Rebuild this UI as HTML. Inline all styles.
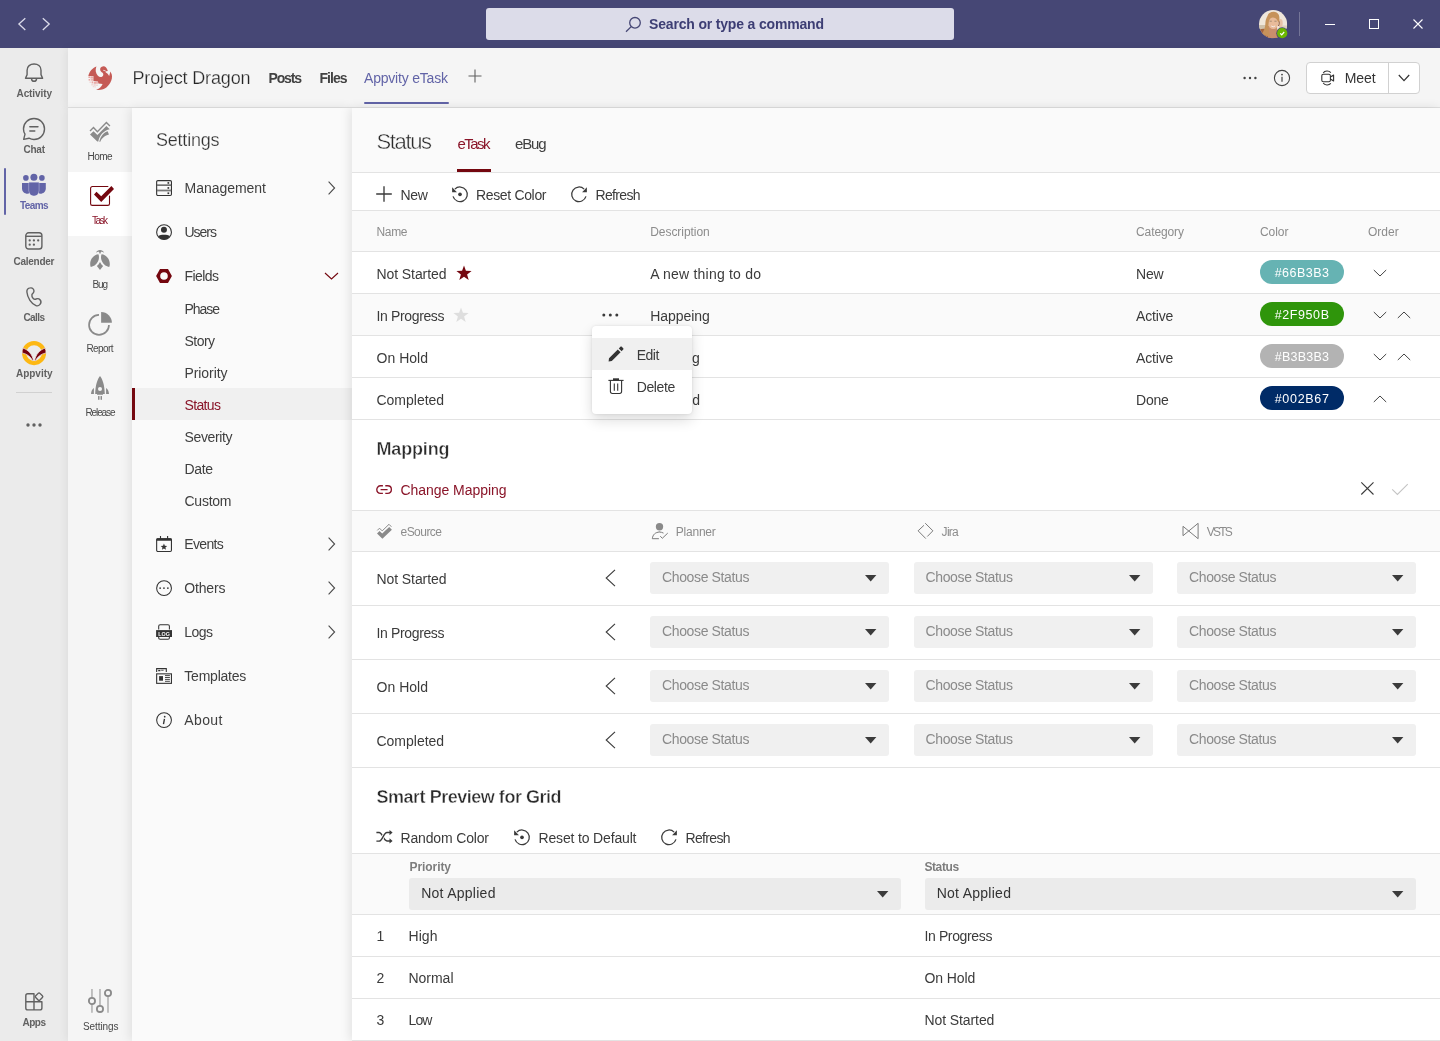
<!DOCTYPE html>
<html lang="en"><head><meta charset="utf-8"><title>Project Dragon - Appvity eTask</title>
<style>
html,body{margin:0;padding:0;}
body{width:1440px;height:1041px;overflow:hidden;position:relative;background:#f5f5f5;font-family:"Liberation Sans",sans-serif;}
.t{position:absolute;white-space:nowrap;display:block;}
.b{position:absolute;box-sizing:border-box;}
.i{position:absolute;overflow:visible;}
#w{position:absolute;left:0;top:0;width:1440px;height:1041px;overflow:hidden;will-change:transform;}
</style></head><body><div id="w">
<div class="b" style="left:0px;top:0px;width:1440px;height:48px;background:#464775;"></div>
<svg class="i" style="left:16px;top:17px;" width="12" height="14" viewBox="0 0 12 14" preserveAspectRatio="none"><path d="M9.3 1.3 L2.9 7.1 L9.3 12.9" fill="none" stroke="#dcdcea" stroke-width="1.3"/></svg>
<svg class="i" style="left:40px;top:17px;" width="12" height="14" viewBox="0 0 12 14" preserveAspectRatio="none"><path d="M2.8 1.3 L9.2 7.1 L2.8 12.9" fill="none" stroke="#dcdcea" stroke-width="1.3"/></svg>
<div class="b" style="left:486px;top:8px;width:468px;height:32px;background:#dcdce9;border-radius:3px;"></div>
<svg class="i" style="left:625px;top:16px;" width="17" height="17" viewBox="0 0 17 17" preserveAspectRatio="none"><circle cx="10" cy="6.8" r="5.3" fill="none" stroke="#464775" stroke-width="1.3"/><path d="M6.2 10.6 L1 15.8" stroke="#464775" stroke-width="1.3" fill="none"/></svg>
<span class="t" style="left:649.00px;top:13.50px;height:21px;line-height:21px;font-size:14px;color:#3d3e74;font-weight:700;letter-spacing:-0.172px;">Search or type a command</span>
<svg class="i" style="left:1258.9px;top:9.8px" width="29" height="29" viewBox="0 0 29 29">
<defs><clipPath id="av"><circle cx="14.1" cy="14.1" r="14.1"/></clipPath></defs>
<g clip-path="url(#av)">
<rect width="28.2" height="28.2" fill="#efe6da"/>
<rect x="0" y="15" width="9" height="5" fill="#cfc1ab"/>
<rect x="20" y="15.5" width="9" height="3" fill="#ddd0bd"/>
<path d="M0 19.5 C4 18 8 18.5 11 21 L19 21 L19 28.2 L0 28.2 Z" fill="#a4623c"/>
<path d="M9 16 L18 16 L18.5 28.2 L9 28.2 Z" fill="#c98e6c"/>
<ellipse cx="21.6" cy="13.2" rx="2.1" ry="4.2" fill="#e9c3a8"/>
<path d="M19.6 10.5 C20.4 12 20.4 14.5 19.4 16" stroke="#7a4a30" stroke-width="0.9" fill="none"/>
<ellipse cx="14.2" cy="12.6" rx="5.2" ry="6.5" fill="#e8bb9a"/>
<path d="M8.5 6 C9 3 12 1.6 15 1.8 C18 2 20.6 4.2 20.4 8.4 C20.4 10 20 11.6 19.6 12.6 L18.4 10.6 C17.2 8 14 6.8 11.6 8.2 C10 9.4 9.6 12 9.6 15 C9.6 19 10.2 22.5 11.4 27 L2.5 24.5 C5 21 6.4 17 6.4 13 C6.4 10 7.4 8 8.5 6 Z" fill="#c6925a"/>
<path d="M10.6 11.2 H12.8 M15.4 11.2 H17.6" stroke="#8a7a62" stroke-width="0.7"/>
<path d="M12.2 16 Q14.2 17.6 16.2 16" stroke="#f6eeee" stroke-width="0.9" fill="none"/>
</g>
<circle cx="23.2" cy="23.2" r="5.9" fill="#464775"/><circle cx="23.2" cy="23.2" r="5.1" fill="#6bb700"/>
<path d="M21.2 23.4 L22.7 24.8 L25.2 22" fill="none" stroke="#fff" stroke-width="1.2"/>
</svg>
<div class="b" style="left:1299px;top:12px;width:1px;height:24px;background:rgba(255,255,255,0.25);"></div>
<div class="b" style="left:1325px;top:24px;width:10px;height:1px;background:#fff;"></div>
<div class="b" style="left:1369px;top:19px;width:10px;height:10px;border:1px solid #fff;"></div>
<svg class="i" style="left:1413px;top:19px;" width="10" height="10" viewBox="0 0 10 10" preserveAspectRatio="none"><path d="M0.5 0.5 L9.5 9.5 M9.5 0.5 L0.5 9.5" stroke="#fff" stroke-width="1.1" fill="none"/></svg>
<div class="b" style="left:0px;top:48px;width:68px;height:993px;background:#ebebeb;"></div>
<svg class="i" style="left:24px;top:62px;" width="20" height="21" viewBox="0 0 20 21" preserveAspectRatio="none"><path d="M3.1 12.6 V8.2 C3.1 4.2 6.2 2 10.05 2 C13.9 2 17 4.2 17 8.2 V12.6 L18.6 16.3 H1.5 Z" fill="none" stroke="#616161" stroke-width="1.4" stroke-linejoin="round"/><path d="M7.5 16.6 C7.7 20.2 12.4 20.2 12.6 16.6" fill="none" stroke="#616161" stroke-width="1.4"/></svg>
<span class="t" style="left:16.50px;top:85.80px;height:15px;line-height:15px;font-size:10px;color:#616161;font-weight:700;letter-spacing:-0.089px;">Activity</span>
<svg class="i" style="left:22px;top:117px;" width="24" height="24" viewBox="0 0 24 24" preserveAspectRatio="none"><path d="M12 1.5 C17.8 1.5 22.5 6.2 22.5 12 C22.5 17.8 17.8 22.5 12 22.5 C10.2 22.5 8.5 22 7 21.2 L1.7 22.4 L3 17.2 C2 15.7 1.5 13.9 1.5 12 C1.5 6.2 6.2 1.5 12 1.5 Z" fill="none" stroke="#616161" stroke-width="1.4" stroke-linejoin="round"/><path d="M7.8 9.8 H16 M7.8 14 H12.8" stroke="#616161" stroke-width="1.4" fill="none" stroke-linecap="round"/></svg>
<span class="t" style="left:23.50px;top:141.80px;height:15px;line-height:15px;font-size:10px;color:#616161;font-weight:700;letter-spacing:-0.240px;">Chat</span>
<div class="b" style="left:4px;top:168px;width:2px;height:47px;background:#6264a7;border-radius:1px;"></div>
<svg class="i" style="left:22px;top:173px;" width="24" height="23" viewBox="0 0 24 23" preserveAspectRatio="none"><circle cx="11.9" cy="4.2" r="3.5" fill="#6264a7"/><circle cx="3.9" cy="4.9" r="2.8" fill="#6264a7"/><circle cx="19.9" cy="4.9" r="2.8" fill="#6264a7"/><path d="M0 9.9 H7 V20.6 C3.2 21.4 0 19 0 15.5 Z" fill="#6264a7"/><path d="M16.9 9.9 H23.8 V15.5 C23.8 19 20.6 21.4 16.9 20.6 Z" fill="#6264a7"/><path d="M6.6 9.4 H17.3 V17.8 A5.35 5.2 0 0 1 6.6 17.8 Z" fill="#c3c4e3"/><path d="M7.1 9.4 H16.8 V17.8 A4.85 4.9 0 0 1 7.1 17.8 Z" fill="#6264a7"/></svg>
<span class="t" style="left:20.00px;top:197.80px;height:15px;line-height:15px;font-size:10px;color:#6264a7;font-weight:700;letter-spacing:-0.610px;">Teams</span>
<svg class="i" style="left:24px;top:231px;" width="20" height="20" viewBox="0 0 20 20" preserveAspectRatio="none"><rect x="1.8" y="1.8" width="16.1" height="16.2" rx="2.8" fill="none" stroke="#616161" stroke-width="1.4"/><path d="M1.8 5.3 H17.9" stroke="#616161" stroke-width="1.4"/><g fill="#616161"><circle cx="5.7" cy="9.4" r="1.15"/><circle cx="9.9" cy="9.4" r="1.15"/><circle cx="14.2" cy="9.4" r="1.15"/><circle cx="5.7" cy="13.7" r="1.15"/><circle cx="9.9" cy="13.7" r="1.15"/></g></svg>
<span class="t" style="left:13.50px;top:253.80px;height:15px;line-height:15px;font-size:10px;color:#616161;font-weight:700;letter-spacing:-0.256px;">Calender</span>
<svg class="i" style="left:24px;top:286px;" width="20" height="22" viewBox="0 0 20 22" preserveAspectRatio="none"><path d="M6.4 1.9 C8.6 1.5 10.3 3.6 9.9 5.6 C9.6 7 8.2 7.6 7.9 8.6 C7.7 9.8 8.4 11.6 9.2 12.4 C10 13.2 11 13.4 12 13 C13.4 12.4 15 12.6 16 13.8 C17.2 15.2 17.2 17 16 18.4 C14.8 19.8 13.4 20.2 12 19.6 C7.4 17.8 3.4 11.8 2.9 6 C2.7 3.8 4.2 2.2 6.4 1.9 Z" fill="none" stroke="#616161" stroke-width="1.4" stroke-linejoin="round"/></svg>
<span class="t" style="left:23.50px;top:309.80px;height:15px;line-height:15px;font-size:10px;color:#616161;font-weight:700;letter-spacing:-0.600px;">Calls</span>
<svg class="i" style="left:21.95px;top:340.9px;" width="24.14" height="24.14" viewBox="0 0 24.14 24.14" preserveAspectRatio="none"><circle cx="12.07" cy="12.07" r="9.95" fill="none" stroke="#fdb813" stroke-width="4.25"/><g fill="#75000e" stroke="#f6f0ee" stroke-width="0.7"><path d="M1.1 7.1 C6.5 9 10.3 13.5 11.5 19.6 L10.6 19.8 C9 16 5.5 13 0.1 11.9 C0.1 10 0.4 8.5 1.1 7.1 Z"/><path d="M23.04 7.1 C17.64 9 13.84 13.5 12.64 19.6 L13.54 19.8 C15.14 16 18.64 13 24.04 11.9 C24.04 10 23.74 8.5 23.04 7.1 Z"/></g></svg>
<span class="t" style="left:16.00px;top:365.80px;height:15px;line-height:15px;font-size:10px;color:#616161;font-weight:700;letter-spacing:-0.028px;">Appvity</span>
<div class="b" style="left:16px;top:392px;width:36px;height:1px;background:#d1d1d1;"></div>
<svg class="i" style="left:26px;top:423px;" width="16" height="4" viewBox="0 0 16 4" preserveAspectRatio="none"><circle cx="2" cy="2" r="1.7" fill="#616161"/><circle cx="8" cy="2" r="1.7" fill="#616161"/><circle cx="14" cy="2" r="1.7" fill="#616161"/></svg>
<svg class="i" style="left:24px;top:991px;" width="21" height="21" viewBox="0 0 21 21" preserveAspectRatio="none"><path d="M10 10.8 V2.8 H3.8 A2 2 0 0 0 1.8 4.8 V16.9 A2 2 0 0 0 3.8 18.9 H15.9 A2 2 0 0 0 17.9 16.9 V10.8 H1.8 M10 10.8 V18.9" fill="none" stroke="#616161" stroke-width="1.4" stroke-linejoin="round"/><rect x="12.05" y="2.7" width="6" height="6" rx="1.3" transform="rotate(45 15.05 5.7)" fill="none" stroke="#616161" stroke-width="1.4"/></svg>
<span class="t" style="left:22.50px;top:1015.30px;height:15px;line-height:15px;font-size:10px;color:#616161;font-weight:700;letter-spacing:-0.500px;">Apps</span>
<div class="b" style="left:68px;top:48px;width:1372px;height:59px;background:#f5f5f5;box-shadow:-2px 0 8px rgba(0,0,0,0.06);"></div>
<div class="b" style="left:68px;top:107px;width:1372px;height:1px;background:#e0e0e0;"></div>
<svg class="i" style="left:87.8px;top:65.7px" width="24.4" height="24.4" viewBox="0 0 24.4 24.4">
<g fill="#e9a9a5"><rect x="0.4" y="10.4" width="1.6" height="1.6"/><rect x="2.4" y="10.4" width="2.6" height="2.2"/><rect x="0.6" y="13" width="1.4" height="1.6"/><rect x="2.6" y="13.2" width="2.4" height="1.4"/><rect x="1.6" y="15.6" width="1.2" height="1.2" opacity="0.6"/><rect x="3.6" y="15.4" width="1.6" height="2"/><rect x="5.8" y="15.8" width="2.2" height="2"/><rect x="8.2" y="15.8" width="1.6" height="2"/><rect x="3.4" y="18.2" width="1.4" height="1.2" opacity="0.6"/><rect x="5.4" y="18.4" width="2.4" height="1.2" opacity="0.6"/><rect x="4.8" y="20.2" width="1.4" height="1" opacity="0.5"/><rect x="6.6" y="20.4" width="1.2" height="1" opacity="0.5"/><rect x="8.4" y="18.6" width="1.2" height="1.2" opacity="0.7"/></g>
<path d="M8.5 0.5 C5 1.5 1.5 5 0.3 10 L5.4 10 L5.4 15 L10 15.4 L10.4 17.4 C12 17.7 13.5 17.7 14.6 17.9 C13.5 21 11 23 8.1 23.7 C13 25 19 23 22.4 16.6 C23.8 14 24.5 11 23.7 8.3 L22.4 5.5 L21.2 10.1 C20.5 8.5 19 7 17.5 6.3 L19.8 4.8 C19 2 17.5 0.3 15.4 0.2 C13 0.5 11.8 2.3 12.2 3.7 C12.3 5 13.5 5.8 14.6 6.8 C15.8 8 15.5 10 14 10.8 C11.5 11.8 8.5 9.5 7.8 5.5 C7.6 3.5 7.9 1.8 8.5 0.5 Z" fill="#c55a55"/>
<path d="M15.4 3.8 L19.4 5.6 L19 6 L15.2 4.6 Z" fill="#f5f5f5"/>
</svg>
<span class="t" style="left:132.50px;top:65.00px;height:27px;line-height:27px;font-size:18px;color:#252525;letter-spacing:-0.158px;-webkit-text-stroke:0.25px #f5f5f5;">Project Dragon</span>
<span class="t" style="left:268.50px;top:68.20px;height:21px;line-height:21px;font-size:14px;color:#424242;font-weight:700;letter-spacing:-1.155px;">Posts</span>
<span class="t" style="left:319.50px;top:68.20px;height:21px;line-height:21px;font-size:14px;color:#424242;font-weight:700;letter-spacing:-0.976px;">Files</span>
<span class="t" style="left:364.00px;top:68.20px;height:21px;line-height:21px;font-size:14px;color:#6264a7;letter-spacing:-0.200px;">Appvity eTask</span>
<div class="b" style="left:364px;top:101.6px;width:85px;height:2.4px;background:#6264a7;border-radius:1.2px;"></div>
<svg class="i" style="left:468px;top:69px;" width="14" height="14" viewBox="0 0 14 14" preserveAspectRatio="none"><path d="M7 0.5 V13.5 M0.5 7 H13.5" stroke="#616161" stroke-width="1.1" fill="none"/></svg>
<svg class="i" style="left:1243px;top:76px;" width="14" height="4" viewBox="0 0 14 4" preserveAspectRatio="none"><circle cx="1.6" cy="2" r="1.2" fill="#424242"/><circle cx="7" cy="2" r="1.2" fill="#424242"/><circle cx="12.4" cy="2" r="1.2" fill="#424242"/></svg>
<svg class="i" style="left:1273px;top:69px;" width="18" height="18" viewBox="0 0 18 18" preserveAspectRatio="none"><circle cx="9" cy="9" r="7.6" fill="none" stroke="#424242" stroke-width="1.1"/><circle cx="9" cy="5.6" r="0.9" fill="#424242"/><path d="M9 7.8 V12.8" stroke="#424242" stroke-width="1.2"/></svg>
<div class="b" style="left:1306px;top:62px;width:114px;height:32px;background:#fff;border:1px solid #d1d1d1;border-radius:4px;"></div>
<div class="b" style="left:1388px;top:63px;width:1px;height:30px;background:#d1d1d1;"></div>
<svg class="i" style="left:1321px;top:70px;" width="15" height="16" viewBox="0 0 15 16" preserveAspectRatio="none"><rect x="0.8" y="4.2" width="8.6" height="7.6" rx="1.6" fill="none" stroke="#333" stroke-width="1.1"/><path d="M9.4 7 L12.6 5 V11 L9.4 9" fill="none" stroke="#333" stroke-width="1.1" stroke-linejoin="round"/><path d="M2.2 3 C3.8 0.6 7.8 0.4 9.8 2.6 M2.2 13 C3.8 15.4 7.8 15.6 9.8 13.4" fill="none" stroke="#333" stroke-width="1.1"/></svg>
<span class="t" style="left:1344.70px;top:68.30px;height:21px;line-height:21px;font-size:14px;color:#333;letter-spacing:-0.041px;">Meet</span>
<svg class="i" style="left:1398px;top:74px;" width="12" height="8" viewBox="0 0 12 8" preserveAspectRatio="none"><path d="M0.8 1 L6 6.6 L11.2 1" fill="none" stroke="#333" stroke-width="1.2"/></svg>
<div class="b" style="left:68px;top:108px;width:64px;height:933px;background:#f5f5f5;box-shadow:-2px 0 8px rgba(0,0,0,0.06);"></div>
<svg class="i" style="left:90px;top:122px;" width="20" height="20" viewBox="0 0 20 20" preserveAspectRatio="none"><path d="M0 9 L3.5 5.5 L7.4 9.7 L16.4 0.5 L19.9 3.9" fill="none" stroke="#8a8a8a" stroke-width="1.4"/><path d="M0 12.6 L3.5 9.2 L7.4 13.1 L16.4 4 L19.7 7.3 C14 8.5 9.5 13 8.3 19.4 L7.3 19.4 Z" fill="#8a8a8a"/><path d="M9.3 19.8 C10.5 14 14 10.5 17.6 9.3 L19 12.6 C15 13.5 11.5 16.5 10.3 19.8 Z" fill="#8a8a8a"/></svg>
<span class="t" style="left:87.50px;top:149.20px;height:15px;line-height:15px;font-size:10px;color:#484848;letter-spacing:-0.560px;">Home</span>
<div class="b" style="left:68px;top:172px;width:64px;height:64px;background:#ffffff;"></div>
<svg class="i" style="left:90px;top:184px;" width="25" height="22" viewBox="0 0 25 22" preserveAspectRatio="none"><path d="M17.9 2.55 H2.3 A1.7 1.7 0 0 0 0.6 4.25 V19.7 A1.7 1.7 0 0 0 2.3 21.4 H17.8 A1.7 1.7 0 0 0 19.5 19.7 V12" fill="none" stroke="#74070f" stroke-width="1.1" stroke-linecap="round"/><path d="M4 10.4 L6.5 7.8 L11.2 12.2 L21.4 2 L24 4.9 L11.2 17.9 Z" fill="#74070f"/></svg>
<span class="t" style="left:92.00px;top:213.20px;height:15px;line-height:15px;font-size:10px;color:#8a1529;letter-spacing:-1.527px;">Task</span>
<svg class="i" style="left:90px;top:249.9px;" width="20" height="20" viewBox="0 0 20 20" preserveAspectRatio="none"><path d="M5.9 2.9 C7.5 -0.9 12.5 -0.9 14.2 2.9 C12.5 1.8 11.5 1.6 10.8 1.9 L10.6 3.5 H9.4 L9.2 1.9 C8.5 1.6 7.5 1.8 5.9 2.9 Z" fill="#8a8a8a"/><path d="M8.4 4.2 C4 4.5 0 9 0.2 14 C0.2 15.5 0.4 16.4 0.9 16.9 C4.5 16.4 7.5 13.5 8.7 9.5 C9.2 7.5 9 5.5 8.4 4.2 Z" fill="#8a8a8a"/><path d="M11.6 4.2 C16 4.5 20 9 19.8 14 C19.8 15.5 19.6 16.4 19.1 16.9 C15.5 16.4 12.5 13.5 11.3 9.5 C10.8 7.5 11 5.5 11.6 4.2 Z" fill="#8a8a8a"/><path d="M10 12 C11 14 12 15 13.1 16 L10 20 L6.9 16 C8 15 9 14 10 12 Z" fill="#8a8a8a"/></svg>
<span class="t" style="left:92.50px;top:277.30px;height:15px;line-height:15px;font-size:10px;color:#484848;letter-spacing:-1.145px;">Bug</span>
<svg class="i" style="left:88px;top:312px;" width="24" height="24" viewBox="0 0 24 24" preserveAspectRatio="none"><path d="M11 2.95 A9.95 9.95 0 1 0 20.95 12.9" fill="none" stroke="#8a8a8a" stroke-width="1.7"/><path d="M13.1 10.8 V0.05 A10.75 10.75 0 0 1 23.9 10.8 Z" fill="#8a8a8a"/></svg>
<span class="t" style="left:86.50px;top:341.40px;height:15px;line-height:15px;font-size:10px;color:#484848;letter-spacing:-0.602px;">Report</span>
<svg class="i" style="left:90px;top:376px;" width="20" height="24" viewBox="0 0 20 24" preserveAspectRatio="none"><path d="M10 0 C12.5 3 14.6 9 14.8 17.9 H13 L12.9 18.7 H7.1 L7 17.9 H5.2 C5.4 9 7.5 3 10 0 Z" fill="#8a8a8a"/><circle cx="10" cy="13" r="2" fill="#f5f5f5"/><path d="M3.9 12 V17.9 H1 C1.2 15 2.3 13 3.9 12 Z M16.1 12 V17.9 H19 C18.8 15 17.7 13 16.1 12 Z" fill="#8a8a8a"/><rect x="8.1" y="20.1" width="3.9" height="3.6" fill="#c4c4c4"/><path d="M8.6 20.1 V23.7 M11.5 20.1 V23.7" stroke="#8a8a8a" stroke-width="1"/></svg>
<span class="t" style="left:85.50px;top:405.30px;height:15px;line-height:15px;font-size:10px;color:#484848;letter-spacing:-1.115px;">Release</span>
<svg class="i" style="left:88px;top:988px;" width="25" height="25" viewBox="0 0 25 25" preserveAspectRatio="none"><path d="M3.96 1.1 V9.8 M3.96 16.1 V24.8 M11.98 1.1 V17.8 M20 8.2 V24.8" stroke="#b3b3b3" stroke-width="1.6" fill="none"/><circle cx="3.96" cy="12.95" r="3.1" fill="none" stroke="#8a8a8a" stroke-width="1.8"/><circle cx="11.98" cy="20.9" r="3.1" fill="none" stroke="#8a8a8a" stroke-width="1.8"/><circle cx="20" cy="5" r="3.1" fill="none" stroke="#8a8a8a" stroke-width="1.8"/></svg>
<span class="t" style="left:83.00px;top:1019.10px;height:15px;line-height:15px;font-size:10px;color:#484848;letter-spacing:-0.090px;">Settings</span>
<div class="b" style="left:132px;top:108px;width:220px;height:933px;background:#fafafa;box-shadow:-2px 0 10px rgba(0,0,0,0.09);"></div>
<span class="t" style="left:156.00px;top:127.30px;height:27px;line-height:27px;font-size:18px;color:#303030;letter-spacing:-0.219px;-webkit-text-stroke:0.25px #fafafa;">Settings</span>
<svg class="i" style="left:156px;top:180px;" width="17" height="17" viewBox="0 0 17 17" preserveAspectRatio="none"><rect x="0.65" y="0.65" width="14.8" height="14.8" rx="1.2" fill="none" stroke="#333333" stroke-width="1.1"/><path d="M0.65 5.3 H15.45 M0.65 10.6 H15.45" stroke="#333333" stroke-width="1.5"/><path d="M0.9 5.3 H15.2 M0.9 10.6 H15.2" stroke="#fafafa" stroke-width="0.4"/><rect x="11.5" y="2.1" width="1.7" height="1.7" fill="#333333"/><rect x="11.5" y="7.1" width="1.7" height="1.7" fill="#333333"/><rect x="11.5" y="12.4" width="1.7" height="1.7" fill="#333333"/></svg>
<span class="t" style="left:184.50px;top:177.50px;height:21px;line-height:21px;font-size:14px;color:#3f3f3f;letter-spacing:-0.024px;">Management</span>
<svg class="i" style="left:327px;top:180px;" width="9" height="16" viewBox="0 0 9 16" preserveAspectRatio="none"><path d="M1.6 1.6 L7.6 8 L1.6 14.4" fill="none" stroke="#4a4a4a" stroke-width="1.1"/></svg>
<svg class="i" style="left:156px;top:224px;" width="17" height="17" viewBox="0 0 17 17" preserveAspectRatio="none"><circle cx="8.05" cy="8.15" r="7.4" fill="none" stroke="#333333" stroke-width="1.1"/><circle cx="7.95" cy="5.7" r="3" fill="#333333"/><path d="M2.2 12 C4.5 10.3 11.5 10.3 13.9 12 C12.6 14.4 10.6 15.6 8.05 15.6 C5.5 15.6 3.4 14.4 2.2 12 Z" fill="#333333"/></svg>
<span class="t" style="left:184.50px;top:221.50px;height:21px;line-height:21px;font-size:14px;color:#3f3f3f;letter-spacing:-1.014px;">Users</span>
<svg class="i" style="left:156.1px;top:269.2px;" width="16" height="14" viewBox="0 0 16 14" preserveAspectRatio="none"><path fill-rule="evenodd" d="M4 0 H12 L15.9 7 L12 14 H4 L0.1 7 Z M8 3.2 A3.8 3.8 0 1 0 8 10.8 A3.8 3.8 0 1 0 8 3.2 Z" fill="#74070f"/></svg>
<span class="t" style="left:184.50px;top:265.50px;height:21px;line-height:21px;font-size:14px;color:#3f3f3f;letter-spacing:-0.570px;">Fields</span>
<svg class="i" style="left:324px;top:272px;" width="15" height="8" viewBox="0 0 15 8" preserveAspectRatio="none"><path d="M1 1 L7.5 7 L14 1" fill="none" stroke="#74070f" stroke-width="1.1"/></svg>
<span class="t" style="left:184.50px;top:298.50px;height:21px;line-height:21px;font-size:14px;color:#3f3f3f;letter-spacing:-1.047px;">Phase</span>
<span class="t" style="left:184.50px;top:330.50px;height:21px;line-height:21px;font-size:14px;color:#3f3f3f;letter-spacing:-0.544px;">Story</span>
<span class="t" style="left:184.50px;top:362.50px;height:21px;line-height:21px;font-size:14px;color:#3f3f3f;letter-spacing:-0.079px;">Priority</span>
<div class="b" style="left:132px;top:388px;width:220px;height:32px;background:#f0f0f0;"></div>
<div class="b" style="left:132px;top:388px;width:3px;height:32px;background:#74070f;"></div>
<span class="t" style="left:184.50px;top:394.50px;height:21px;line-height:21px;font-size:14px;color:#8a1529;letter-spacing:-0.638px;">Status</span>
<span class="t" style="left:184.50px;top:426.50px;height:21px;line-height:21px;font-size:14px;color:#3f3f3f;letter-spacing:-0.367px;">Severity</span>
<span class="t" style="left:184.50px;top:458.50px;height:21px;line-height:21px;font-size:14px;color:#3f3f3f;letter-spacing:-0.356px;">Date</span>
<span class="t" style="left:184.50px;top:490.50px;height:21px;line-height:21px;font-size:14px;color:#3f3f3f;letter-spacing:-0.246px;">Custom</span>
<svg class="i" style="left:156px;top:535px;" width="17" height="18" viewBox="0 0 17 18" preserveAspectRatio="none"><rect x="0.65" y="3.7" width="14.8" height="12.8" rx="1.2" fill="none" stroke="#333333" stroke-width="1.1"/><path d="M0.4 4.2 C0.4 3.6 0.8 3.2 1.4 3.2 H14.7 C15.3 3.2 15.7 3.6 15.7 4.2 V5.8 H0.4 Z" fill="#333333"/><path d="M4.5 1 V4 M11.6 1 V4" stroke="#333333" stroke-width="1.1"/><path d="M7.95 8.6 L8.85 10.8 L11.2 11 L9.4 12.5 L10 14.8 L7.95 13.5 L5.9 14.8 L6.5 12.5 L4.7 11 L7.05 10.8 Z" fill="#333333"/></svg>
<span class="t" style="left:184.30px;top:533.50px;height:21px;line-height:21px;font-size:14px;color:#3f3f3f;letter-spacing:-0.680px;">Events</span>
<svg class="i" style="left:327px;top:536px;" width="9" height="16" viewBox="0 0 9 16" preserveAspectRatio="none"><path d="M1.6 1.6 L7.6 8 L1.6 14.4" fill="none" stroke="#4a4a4a" stroke-width="1.1"/></svg>
<svg class="i" style="left:156px;top:580px;" width="17" height="17" viewBox="0 0 17 17" preserveAspectRatio="none"><circle cx="8.05" cy="8.15" r="7.4" fill="none" stroke="#333333" stroke-width="1.05"/><rect x="3.4" y="7.4" width="1.5" height="1.5" fill="#333333"/><rect x="7.2" y="7.4" width="1.5" height="1.5" fill="#333333"/><rect x="11.1" y="7.4" width="1.5" height="1.5" fill="#333333"/></svg>
<span class="t" style="left:184.30px;top:577.50px;height:21px;line-height:21px;font-size:14px;color:#3f3f3f;letter-spacing:-0.163px;">Others</span>
<svg class="i" style="left:327px;top:580px;" width="9" height="16" viewBox="0 0 9 16" preserveAspectRatio="none"><path d="M1.6 1.6 L7.6 8 L1.6 14.4" fill="none" stroke="#4a4a4a" stroke-width="1.1"/></svg>
<svg class="i" style="left:156px;top:624px;" width="17" height="17" viewBox="0 0 17 17" preserveAspectRatio="none"><path d="M2.7 5.6 V2.2 C2.7 1.4 3.3 0.8 4.1 0.8 H12 C12.8 0.8 13.4 1.4 13.4 2.2 V5.6 M2.7 13 V14 C2.7 14.8 3.3 15.3 4.1 15.3 H12 C12.8 15.3 13.4 14.8 13.4 14 V13" fill="none" stroke="#333333" stroke-width="1.05"/><rect x="0.1" y="6.1" width="15.9" height="6.9" fill="#333333"/><text x="8.05" y="11.5" font-family="Liberation Sans" font-size="5.4" font-weight="700" fill="#fafafa" text-anchor="middle">LOG</text></svg>
<span class="t" style="left:184.30px;top:621.50px;height:21px;line-height:21px;font-size:14px;color:#3f3f3f;letter-spacing:-0.517px;">Logs</span>
<svg class="i" style="left:327px;top:624px;" width="9" height="16" viewBox="0 0 9 16" preserveAspectRatio="none"><path d="M1.6 1.6 L7.6 8 L1.6 14.4" fill="none" stroke="#4a4a4a" stroke-width="1.1"/></svg>
<svg class="i" style="left:156px;top:667px;" width="17" height="18" viewBox="0 0 17 18" preserveAspectRatio="none"><rect x="0.65" y="6.85" width="14.8" height="9.5" fill="none" stroke="#333333" stroke-width="1.1"/><path d="M0.65 5 V1.65 H10.3 V5" fill="none" stroke="#333333" stroke-width="1.1"/><path d="M2.2 3.6 H4.4" stroke="#333333" stroke-width="1.3"/><path d="M5.2 3.3 H7.6" stroke="#333333" stroke-width="0.8"/><rect x="3.1" y="9.1" width="3.9" height="4.6" fill="#333333"/><path d="M9 8.6 H13.9 M9 10.5 H13.9 M9 12.4 H13.9 M9 14.3 H13.9" stroke="#333333" stroke-width="0.9"/></svg>
<span class="t" style="left:184.30px;top:665.50px;height:21px;line-height:21px;font-size:14px;color:#3f3f3f;letter-spacing:-0.226px;">Templates</span>
<svg class="i" style="left:156px;top:711.8px;" width="17" height="17" viewBox="0 0 17 17" preserveAspectRatio="none"><circle cx="8.05" cy="8.05" r="7.4" fill="none" stroke="#333333" stroke-width="1.05"/><circle cx="8.7" cy="4.7" r="0.85" fill="#333333"/><path d="M8.45 6.9 L7.45 12.2" stroke="#333333" stroke-width="1.35"/></svg>
<span class="t" style="left:184.30px;top:709.50px;height:21px;line-height:21px;font-size:14px;color:#3f3f3f;letter-spacing:0.354px;">About</span>
<div class="b" style="left:352px;top:108px;width:1088px;height:933px;background:#ffffff;box-shadow:-2px 0 10px rgba(0,0,0,0.10);"></div>
<div class="b" style="left:352px;top:108px;width:1088px;height:64px;background:#fafafa;"></div>
<div class="b" style="left:352px;top:172px;width:1088px;height:1px;background:#e3e3e3;"></div>
<span class="t" style="left:376.50px;top:125.10px;height:33px;line-height:33px;font-size:22px;color:#2b2b2b;letter-spacing:-1.374px;-webkit-text-stroke:0.45px #fafafa;">Status</span>
<span class="t" style="left:457.50px;top:133.30px;height:22px;line-height:22px;font-size:15px;color:#8a1529;letter-spacing:-1.553px;">eTask</span>
<span class="t" style="left:515.00px;top:133.30px;height:22px;line-height:22px;font-size:15px;color:#3f3f3f;letter-spacing:-1.175px;">eBug</span>
<div class="b" style="left:457px;top:169px;width:34px;height:3px;background:#74070f;"></div>
<div class="b" style="left:352px;top:210px;width:1088px;height:1px;background:#e3e3e3;"></div>
<svg class="i" style="left:376px;top:186px;" width="16" height="16" viewBox="0 0 16 16" preserveAspectRatio="none"><path d="M8 0.2 V15.8 M0.2 8 H15.8" stroke="#3b3b3b" stroke-width="1.35" fill="none"/></svg>
<span class="t" style="left:400.50px;top:184.80px;height:21px;line-height:21px;font-size:14px;color:#3b3b3b;letter-spacing:-0.271px;">New</span>
<svg class="i" style="left:452px;top:185.6px;" width="17" height="17" viewBox="0 0 17 17" preserveAspectRatio="none"><path d="M2.84 3.14 A7.3 7.3 0 1 1 1.02 10.43" fill="none" stroke="#3b3b3b" stroke-width="1.25"/><path d="M0.15 1.2 V6.2 H4.9 Z" fill="#3b3b3b"/><circle cx="8" cy="8.3" r="1.85" fill="#3b3b3b"/></svg>
<span class="t" style="left:476.00px;top:184.80px;height:21px;line-height:21px;font-size:14px;color:#3b3b3b;letter-spacing:-0.342px;">Reset Color</span>
<svg class="i" style="left:571px;top:185.6px;" width="17" height="17" viewBox="0 0 17 17" preserveAspectRatio="none"><path d="M13.16 3.14 A7.3 7.3 0 1 0 14.98 10.43" fill="none" stroke="#3b3b3b" stroke-width="1.25"/><path d="M15.85 1.2 V6.2 H11.1 Z" fill="#3b3b3b"/></svg>
<span class="t" style="left:595.50px;top:184.80px;height:21px;line-height:21px;font-size:14px;color:#3b3b3b;letter-spacing:-0.669px;">Refresh</span>
<div class="b" style="left:352px;top:211px;width:1088px;height:40px;background:#fafafa;"></div>
<div class="b" style="left:352px;top:251px;width:1088px;height:1px;background:#e3e3e3;"></div>
<span class="t" style="left:376.50px;top:223.20px;height:18px;line-height:18px;font-size:12px;color:#8c8c8c;letter-spacing:-0.339px;">Name</span>
<span class="t" style="left:650.20px;top:223.20px;height:18px;line-height:18px;font-size:12px;color:#8c8c8c;letter-spacing:-0.042px;">Description</span>
<span class="t" style="left:1136.00px;top:223.20px;height:18px;line-height:18px;font-size:12px;color:#8c8c8c;letter-spacing:-0.099px;">Category</span>
<span class="t" style="left:1260.00px;top:223.20px;height:18px;line-height:18px;font-size:12px;color:#8c8c8c;letter-spacing:-0.070px;">Color</span>
<span class="t" style="left:1368.00px;top:223.20px;height:18px;line-height:18px;font-size:12px;color:#8c8c8c;letter-spacing:0.007px;">Order</span>
<div class="b" style="left:352px;top:293px;width:1088px;height:1px;background:#e3e3e3;"></div>
<span class="t" style="left:376.50px;top:263.80px;height:21px;line-height:21px;font-size:14px;color:#3b3b3b;letter-spacing:-0.081px;">Not Started</span>
<svg class="i" style="left:456.2px;top:265.2px;" width="16.0" height="15.0" viewBox="0 0 15 14" preserveAspectRatio="none"><path d="M7.5 0.4 L9.3 5.3 L14.6 5.5 L10.4 8.8 L11.9 13.9 L7.5 10.9 L3.1 13.9 L4.6 8.8 L0.4 5.5 L5.7 5.3 Z" fill="#74070f"/></svg>
<span class="t" style="left:650.20px;top:263.80px;height:21px;line-height:21px;font-size:14px;color:#3b3b3b;letter-spacing:0.212px;">A new thing to do</span>
<span class="t" style="left:1136.00px;top:263.80px;height:21px;line-height:21px;font-size:14px;color:#3b3b3b;letter-spacing:-0.221px;">New</span>
<div class="b" style="left:1260px;top:259.5px;width:84px;height:24px;background:#66B3B3;border-radius:12px;"></div>
<span class="t" style="left:1274.70px;top:264.10px;height:19px;line-height:19px;font-size:12.5px;color:#ffffff;letter-spacing:0.477px;">#66B3B3</span>
<svg class="i" style="left:1373px;top:268.8px;" width="14" height="8" viewBox="0 0 14 8" preserveAspectRatio="none"><path d="M0.8 1 L7 7 L13.2 1" fill="none" stroke="#444" stroke-width="1"/></svg>
<div class="b" style="left:352px;top:294px;width:1088px;height:41px;background:#fafafa;"></div>
<div class="b" style="left:352px;top:335px;width:1088px;height:1px;background:#e3e3e3;"></div>
<span class="t" style="left:376.50px;top:305.80px;height:21px;line-height:21px;font-size:14px;color:#3b3b3b;letter-spacing:-0.358px;">In Progress</span>
<svg class="i" style="left:453.2px;top:306.6px;" width="16.0" height="15.0" viewBox="0 0 15 14" preserveAspectRatio="none"><path d="M7.5 0.4 L9.3 5.3 L14.6 5.5 L10.4 8.8 L11.9 13.9 L7.5 10.9 L3.1 13.9 L4.6 8.8 L0.4 5.5 L5.7 5.3 Z" fill="#dedede"/></svg>
<svg class="i" style="left:602px;top:313px;" width="17" height="4" viewBox="0 0 17 4" preserveAspectRatio="none"><circle cx="1.8" cy="2" r="1.5" fill="#3b3b3b"/><circle cx="8.3" cy="2" r="1.5" fill="#3b3b3b"/><circle cx="14.8" cy="2" r="1.5" fill="#3b3b3b"/></svg>
<span class="t" style="left:650.20px;top:305.80px;height:21px;line-height:21px;font-size:14px;color:#3b3b3b;letter-spacing:-0.048px;">Happeing</span>
<span class="t" style="left:1136.00px;top:305.80px;height:21px;line-height:21px;font-size:14px;color:#3b3b3b;letter-spacing:-0.164px;">Active</span>
<div class="b" style="left:1260px;top:301.5px;width:84px;height:24px;background:#2F950B;border-radius:12px;"></div>
<span class="t" style="left:1274.70px;top:306.10px;height:19px;line-height:19px;font-size:12.5px;color:#ffffff;letter-spacing:0.594px;">#2F950B</span>
<svg class="i" style="left:1373px;top:310.8px;" width="14" height="8" viewBox="0 0 14 8" preserveAspectRatio="none"><path d="M0.8 1 L7 7 L13.2 1" fill="none" stroke="#444" stroke-width="1"/></svg>
<svg class="i" style="left:1397px;top:310.8px;" width="14" height="8" viewBox="0 0 14 8" preserveAspectRatio="none"><path d="M0.8 7 L7 1 L13.2 7" fill="none" stroke="#444" stroke-width="1"/></svg>
<div class="b" style="left:352px;top:377px;width:1088px;height:1px;background:#e3e3e3;"></div>
<span class="t" style="left:376.50px;top:347.80px;height:21px;line-height:21px;font-size:14px;color:#3b3b3b;letter-spacing:0.025px;">On Hold</span>
<span class="t" style="left:650.20px;top:347.80px;height:21px;line-height:21px;font-size:14px;color:#3b3b3b;letter-spacing:-0.313px;">Pending</span>
<span class="t" style="left:1136.00px;top:347.80px;height:21px;line-height:21px;font-size:14px;color:#3b3b3b;letter-spacing:-0.164px;">Active</span>
<div class="b" style="left:1260px;top:343.5px;width:84px;height:24px;background:#B3B3B3;border-radius:12px;"></div>
<span class="t" style="left:1274.70px;top:348.10px;height:19px;line-height:19px;font-size:12.5px;color:#ffffff;letter-spacing:0.246px;">#B3B3B3</span>
<svg class="i" style="left:1373px;top:352.8px;" width="14" height="8" viewBox="0 0 14 8" preserveAspectRatio="none"><path d="M0.8 1 L7 7 L13.2 1" fill="none" stroke="#444" stroke-width="1"/></svg>
<svg class="i" style="left:1397px;top:352.8px;" width="14" height="8" viewBox="0 0 14 8" preserveAspectRatio="none"><path d="M0.8 7 L7 1 L13.2 7" fill="none" stroke="#444" stroke-width="1"/></svg>
<div class="b" style="left:352px;top:419px;width:1088px;height:1px;background:#e3e3e3;"></div>
<span class="t" style="left:376.50px;top:389.80px;height:21px;line-height:21px;font-size:14px;color:#3b3b3b;letter-spacing:-0.013px;">Completed</span>
<span class="t" style="left:650.20px;top:389.80px;height:21px;line-height:21px;font-size:14px;color:#3b3b3b;letter-spacing:-0.446px;">Finished</span>
<span class="t" style="left:1136.00px;top:389.80px;height:21px;line-height:21px;font-size:14px;color:#3b3b3b;letter-spacing:-0.191px;">Done</span>
<div class="b" style="left:1260px;top:385.5px;width:84px;height:24px;background:#002B67;border-radius:12px;"></div>
<span class="t" style="left:1274.70px;top:390.10px;height:19px;line-height:19px;font-size:12.5px;color:#ffffff;letter-spacing:0.708px;">#002B67</span>
<svg class="i" style="left:1373px;top:394.8px;" width="14" height="8" viewBox="0 0 14 8" preserveAspectRatio="none"><path d="M0.8 7 L7 1 L13.2 7" fill="none" stroke="#444" stroke-width="1"/></svg>
<span class="t" style="left:376.50px;top:435.70px;height:27px;line-height:27px;font-size:18px;color:#2b2b2b;font-weight:700;letter-spacing:-0.163px;-webkit-text-stroke:0.4px #ffffff;">Mapping</span>
<svg class="i" style="left:375.9px;top:485px;" width="16.2" height="9.2" viewBox="0 0 16.2 9.2" preserveAspectRatio="none"><path d="M6.9 0.8 H4.6 C2.3 0.8 0.8 2.5 0.8 4.6 C0.8 6.7 2.3 8.4 4.6 8.4 H6.9 M9.3 0.8 H11.6 C13.9 0.8 15.4 2.5 15.4 4.6 C15.4 6.7 13.9 8.4 11.6 8.4 H9.3 M4.6 4.6 H11.6" fill="none" stroke="#8a1529" stroke-width="1.35"/></svg>
<span class="t" style="left:400.50px;top:479.80px;height:21px;line-height:21px;font-size:14px;color:#8a1529;letter-spacing:-0.049px;">Change Mapping</span>
<svg class="i" style="left:1361.1px;top:482px;" width="12.8" height="12.8" viewBox="0 0 12.8 12.8" preserveAspectRatio="none"><path d="M0.3 0.3 L12.5 12.5 M12.5 0.3 L0.3 12.5" stroke="#3b3b3b" stroke-width="1.1" fill="none"/></svg>
<svg class="i" style="left:1391px;top:482px;" width="18" height="13" viewBox="0 0 18 13" preserveAspectRatio="none"><path d="M1.2 7.3 L6.4 12.4 L16.75 2.1" stroke="#c4c4c4" stroke-width="1.1" fill="none"/></svg>
<div class="b" style="left:352px;top:510px;width:1088px;height:1px;background:#e3e3e3;"></div>
<div class="b" style="left:352px;top:511px;width:1088px;height:40px;background:#fafafa;"></div>
<div class="b" style="left:352px;top:551px;width:1088px;height:1px;background:#e3e3e3;"></div>
<svg class="i" style="left:376px;top:523px;" width="17" height="17" viewBox="0 0 17 17" preserveAspectRatio="none"><path d="M1.3 7.4 L3.5 5.2 L6.2 7.9 L13 1.3 L15.4 3.75" fill="none" stroke="#8a8a8a" stroke-width="1"/><path d="M1 10.6 L3.5 8 L6.2 10.5 L13.2 4 L15.9 6.7 L6.4 15.7 Z" fill="#8a8a8a"/></svg>
<span class="t" style="left:400.50px;top:523.20px;height:18px;line-height:18px;font-size:12px;color:#8c8c8c;letter-spacing:-0.533px;">eSource</span>
<svg class="i" style="left:652px;top:522px;" width="17" height="18" viewBox="0 0 17 18" preserveAspectRatio="none"><circle cx="7.5" cy="4.65" r="3.65" fill="#8a8a8a"/><path d="M7.5 8 V10" stroke="#c8c8c8" stroke-width="1.6"/><path d="M0.3 16.7 C0.8 12.5 3.5 10.1 7.6 10.1 C9 10.1 10.2 10.4 11.5 11.1 M0.3 16.7 H6.9" fill="none" stroke="#7c7c7c" stroke-width="1"/><path d="M8.3 14.2 L10.3 16.3 L15.75 11.1" fill="none" stroke="#7c7c7c" stroke-width="1"/></svg>
<span class="t" style="left:675.80px;top:523.20px;height:18px;line-height:18px;font-size:12px;color:#8c8c8c;letter-spacing:-0.227px;">Planner</span>
<svg class="i" style="left:917px;top:522px;" width="17" height="18" viewBox="0 0 17 18" preserveAspectRatio="none"><path d="M6.96 3.3 L1.1 8.8 L8.8 16.6 M8.2 1.2 L15.9 8.8 L10.3 14.5" fill="none" stroke="#7c7c7c" stroke-width="1"/></svg>
<span class="t" style="left:941.60px;top:523.20px;height:18px;line-height:18px;font-size:12px;color:#8c8c8c;letter-spacing:-0.715px;">Jira</span>
<svg class="i" style="left:1182px;top:522px;" width="17" height="18" viewBox="0 0 17 18" preserveAspectRatio="none"><path d="M1 4.3 V13.7 L16.1 1.3 V16.7 Z" fill="none" stroke="#7c7c7c" stroke-width="1" stroke-linejoin="round"/></svg>
<span class="t" style="left:1206.70px;top:523.20px;height:18px;line-height:18px;font-size:12px;color:#8c8c8c;letter-spacing:-1.781px;">VSTS</span>
<div class="b" style="left:352px;top:605px;width:1088px;height:1px;background:#e3e3e3;"></div>
<span class="t" style="left:376.50px;top:568.80px;height:21px;line-height:21px;font-size:14px;color:#3b3b3b;letter-spacing:-0.081px;">Not Started</span>
<svg class="i" style="left:605px;top:569px;" width="11" height="18" viewBox="0 0 11 18" preserveAspectRatio="none"><path d="M10 0.8 L1.2 9 L10 17.2" fill="none" stroke="#3b3b3b" stroke-width="1.1"/></svg>
<div class="b" style="left:650px;top:562px;width:239px;height:32px;background:#f0f0f0;border-radius:3px;"></div>
<span class="t" style="left:662.00px;top:567.10px;height:21px;line-height:21px;font-size:14px;color:#8a8a8a;letter-spacing:-0.362px;">Choose Status</span>
<svg class="i" style="left:865.2px;top:575.2px;" width="11.4" height="6.4" viewBox="0 0 11.4 6.4" preserveAspectRatio="none"><path d="M0 0 H11.4 L5.7 6.4 Z" fill="#3b3b3b"/></svg>
<div class="b" style="left:913.5px;top:562px;width:239px;height:32px;background:#f0f0f0;border-radius:3px;"></div>
<span class="t" style="left:925.50px;top:567.10px;height:21px;line-height:21px;font-size:14px;color:#8a8a8a;letter-spacing:-0.362px;">Choose Status</span>
<svg class="i" style="left:1128.7px;top:575.2px;" width="11.4" height="6.4" viewBox="0 0 11.4 6.4" preserveAspectRatio="none"><path d="M0 0 H11.4 L5.7 6.4 Z" fill="#3b3b3b"/></svg>
<div class="b" style="left:1177px;top:562px;width:239px;height:32px;background:#f0f0f0;border-radius:3px;"></div>
<span class="t" style="left:1189.00px;top:567.10px;height:21px;line-height:21px;font-size:14px;color:#8a8a8a;letter-spacing:-0.362px;">Choose Status</span>
<svg class="i" style="left:1392.2px;top:575.2px;" width="11.4" height="6.4" viewBox="0 0 11.4 6.4" preserveAspectRatio="none"><path d="M0 0 H11.4 L5.7 6.4 Z" fill="#3b3b3b"/></svg>
<div class="b" style="left:352px;top:659px;width:1088px;height:1px;background:#e3e3e3;"></div>
<span class="t" style="left:376.50px;top:622.80px;height:21px;line-height:21px;font-size:14px;color:#3b3b3b;letter-spacing:-0.358px;">In Progress</span>
<svg class="i" style="left:605px;top:623px;" width="11" height="18" viewBox="0 0 11 18" preserveAspectRatio="none"><path d="M10 0.8 L1.2 9 L10 17.2" fill="none" stroke="#3b3b3b" stroke-width="1.1"/></svg>
<div class="b" style="left:650px;top:616px;width:239px;height:32px;background:#f0f0f0;border-radius:3px;"></div>
<span class="t" style="left:662.00px;top:621.10px;height:21px;line-height:21px;font-size:14px;color:#8a8a8a;letter-spacing:-0.362px;">Choose Status</span>
<svg class="i" style="left:865.2px;top:629.2px;" width="11.4" height="6.4" viewBox="0 0 11.4 6.4" preserveAspectRatio="none"><path d="M0 0 H11.4 L5.7 6.4 Z" fill="#3b3b3b"/></svg>
<div class="b" style="left:913.5px;top:616px;width:239px;height:32px;background:#f0f0f0;border-radius:3px;"></div>
<span class="t" style="left:925.50px;top:621.10px;height:21px;line-height:21px;font-size:14px;color:#8a8a8a;letter-spacing:-0.362px;">Choose Status</span>
<svg class="i" style="left:1128.7px;top:629.2px;" width="11.4" height="6.4" viewBox="0 0 11.4 6.4" preserveAspectRatio="none"><path d="M0 0 H11.4 L5.7 6.4 Z" fill="#3b3b3b"/></svg>
<div class="b" style="left:1177px;top:616px;width:239px;height:32px;background:#f0f0f0;border-radius:3px;"></div>
<span class="t" style="left:1189.00px;top:621.10px;height:21px;line-height:21px;font-size:14px;color:#8a8a8a;letter-spacing:-0.362px;">Choose Status</span>
<svg class="i" style="left:1392.2px;top:629.2px;" width="11.4" height="6.4" viewBox="0 0 11.4 6.4" preserveAspectRatio="none"><path d="M0 0 H11.4 L5.7 6.4 Z" fill="#3b3b3b"/></svg>
<div class="b" style="left:352px;top:713px;width:1088px;height:1px;background:#e3e3e3;"></div>
<span class="t" style="left:376.50px;top:676.80px;height:21px;line-height:21px;font-size:14px;color:#3b3b3b;letter-spacing:0.025px;">On Hold</span>
<svg class="i" style="left:605px;top:677px;" width="11" height="18" viewBox="0 0 11 18" preserveAspectRatio="none"><path d="M10 0.8 L1.2 9 L10 17.2" fill="none" stroke="#3b3b3b" stroke-width="1.1"/></svg>
<div class="b" style="left:650px;top:670px;width:239px;height:32px;background:#f0f0f0;border-radius:3px;"></div>
<span class="t" style="left:662.00px;top:675.10px;height:21px;line-height:21px;font-size:14px;color:#8a8a8a;letter-spacing:-0.362px;">Choose Status</span>
<svg class="i" style="left:865.2px;top:683.2px;" width="11.4" height="6.4" viewBox="0 0 11.4 6.4" preserveAspectRatio="none"><path d="M0 0 H11.4 L5.7 6.4 Z" fill="#3b3b3b"/></svg>
<div class="b" style="left:913.5px;top:670px;width:239px;height:32px;background:#f0f0f0;border-radius:3px;"></div>
<span class="t" style="left:925.50px;top:675.10px;height:21px;line-height:21px;font-size:14px;color:#8a8a8a;letter-spacing:-0.362px;">Choose Status</span>
<svg class="i" style="left:1128.7px;top:683.2px;" width="11.4" height="6.4" viewBox="0 0 11.4 6.4" preserveAspectRatio="none"><path d="M0 0 H11.4 L5.7 6.4 Z" fill="#3b3b3b"/></svg>
<div class="b" style="left:1177px;top:670px;width:239px;height:32px;background:#f0f0f0;border-radius:3px;"></div>
<span class="t" style="left:1189.00px;top:675.10px;height:21px;line-height:21px;font-size:14px;color:#8a8a8a;letter-spacing:-0.362px;">Choose Status</span>
<svg class="i" style="left:1392.2px;top:683.2px;" width="11.4" height="6.4" viewBox="0 0 11.4 6.4" preserveAspectRatio="none"><path d="M0 0 H11.4 L5.7 6.4 Z" fill="#3b3b3b"/></svg>
<div class="b" style="left:352px;top:767px;width:1088px;height:1px;background:#e3e3e3;"></div>
<span class="t" style="left:376.50px;top:730.80px;height:21px;line-height:21px;font-size:14px;color:#3b3b3b;letter-spacing:-0.013px;">Completed</span>
<svg class="i" style="left:605px;top:731px;" width="11" height="18" viewBox="0 0 11 18" preserveAspectRatio="none"><path d="M10 0.8 L1.2 9 L10 17.2" fill="none" stroke="#3b3b3b" stroke-width="1.1"/></svg>
<div class="b" style="left:650px;top:724px;width:239px;height:32px;background:#f0f0f0;border-radius:3px;"></div>
<span class="t" style="left:662.00px;top:729.10px;height:21px;line-height:21px;font-size:14px;color:#8a8a8a;letter-spacing:-0.362px;">Choose Status</span>
<svg class="i" style="left:865.2px;top:737.2px;" width="11.4" height="6.4" viewBox="0 0 11.4 6.4" preserveAspectRatio="none"><path d="M0 0 H11.4 L5.7 6.4 Z" fill="#3b3b3b"/></svg>
<div class="b" style="left:913.5px;top:724px;width:239px;height:32px;background:#f0f0f0;border-radius:3px;"></div>
<span class="t" style="left:925.50px;top:729.10px;height:21px;line-height:21px;font-size:14px;color:#8a8a8a;letter-spacing:-0.362px;">Choose Status</span>
<svg class="i" style="left:1128.7px;top:737.2px;" width="11.4" height="6.4" viewBox="0 0 11.4 6.4" preserveAspectRatio="none"><path d="M0 0 H11.4 L5.7 6.4 Z" fill="#3b3b3b"/></svg>
<div class="b" style="left:1177px;top:724px;width:239px;height:32px;background:#f0f0f0;border-radius:3px;"></div>
<span class="t" style="left:1189.00px;top:729.10px;height:21px;line-height:21px;font-size:14px;color:#8a8a8a;letter-spacing:-0.362px;">Choose Status</span>
<svg class="i" style="left:1392.2px;top:737.2px;" width="11.4" height="6.4" viewBox="0 0 11.4 6.4" preserveAspectRatio="none"><path d="M0 0 H11.4 L5.7 6.4 Z" fill="#3b3b3b"/></svg>
<span class="t" style="left:376.50px;top:783.70px;height:27px;line-height:27px;font-size:18px;color:#2b2b2b;font-weight:700;letter-spacing:-0.479px;-webkit-text-stroke:0.4px #ffffff;">Smart Preview for Grid</span>
<svg class="i" style="left:375.5px;top:829px;" width="17" height="16" viewBox="0 0 17 16" preserveAspectRatio="none"><path d="M0.4 3.4 H3 C6.6 3.4 7.4 11.9 11 11.9 H14" fill="none" stroke="#3b3b3b" stroke-width="1.45"/><path d="M3 12.1 C6.6 12.1 7.4 3.55 11 3.55" fill="none" stroke="#fff" stroke-width="3.2"/><path d="M0.4 12.1 H3 C6.6 12.1 7.4 3.55 11 3.55 H14" fill="none" stroke="#3b3b3b" stroke-width="1.45"/><path d="M13.5 0.9 L16.6 3.55 L13.5 6.2 Z M13.5 9.3 L16.6 11.9 L13.5 14.5 Z" fill="#3b3b3b"/></svg>
<span class="t" style="left:400.50px;top:827.80px;height:21px;line-height:21px;font-size:14px;color:#3b3b3b;letter-spacing:-0.160px;">Random Color</span>
<svg class="i" style="left:513.5px;top:828.6px;" width="17" height="17" viewBox="0 0 17 17" preserveAspectRatio="none"><path d="M2.84 3.14 A7.3 7.3 0 1 1 1.02 10.43" fill="none" stroke="#3b3b3b" stroke-width="1.25"/><path d="M0.15 1.2 V6.2 H4.9 Z" fill="#3b3b3b"/><circle cx="8" cy="8.3" r="1.85" fill="#3b3b3b"/></svg>
<span class="t" style="left:538.50px;top:827.80px;height:21px;line-height:21px;font-size:14px;color:#3b3b3b;letter-spacing:-0.159px;">Reset to Default</span>
<svg class="i" style="left:660.5px;top:828.6px;" width="17" height="17" viewBox="0 0 17 17" preserveAspectRatio="none"><path d="M13.16 3.14 A7.3 7.3 0 1 0 14.98 10.43" fill="none" stroke="#3b3b3b" stroke-width="1.25"/><path d="M15.85 1.2 V6.2 H11.1 Z" fill="#3b3b3b"/></svg>
<span class="t" style="left:685.50px;top:827.80px;height:21px;line-height:21px;font-size:14px;color:#3b3b3b;letter-spacing:-0.669px;">Refresh</span>
<div class="b" style="left:352px;top:853px;width:1088px;height:1px;background:#e3e3e3;"></div>
<div class="b" style="left:352px;top:854px;width:1088px;height:60px;background:#fafafa;"></div>
<div class="b" style="left:352px;top:914px;width:1088px;height:1px;background:#e3e3e3;"></div>
<span class="t" style="left:409.50px;top:858.20px;height:18px;line-height:18px;font-size:12px;color:#7d7d7d;font-weight:700;letter-spacing:-0.073px;">Priority</span>
<span class="t" style="left:924.40px;top:858.20px;height:18px;line-height:18px;font-size:12px;color:#7d7d7d;font-weight:700;letter-spacing:-0.394px;">Status</span>
<div class="b" style="left:409px;top:878px;width:491.5px;height:31.5px;background:#ebebeb;border-radius:3px;"></div>
<div class="b" style="left:924.5px;top:878px;width:491.5px;height:31.5px;background:#ebebeb;border-radius:3px;"></div>
<span class="t" style="left:421.20px;top:882.80px;height:21px;line-height:21px;font-size:14px;color:#333;letter-spacing:0.264px;">Not Applied</span>
<span class="t" style="left:936.70px;top:882.80px;height:21px;line-height:21px;font-size:14px;color:#333;letter-spacing:0.264px;">Not Applied</span>
<svg class="i" style="left:876.7px;top:891.2px;" width="11.4" height="6.4" viewBox="0 0 11.4 6.4" preserveAspectRatio="none"><path d="M0 0 H11.4 L5.7 6.4 Z" fill="#3b3b3b"/></svg>
<svg class="i" style="left:1392.2px;top:891.2px;" width="11.4" height="6.4" viewBox="0 0 11.4 6.4" preserveAspectRatio="none"><path d="M0 0 H11.4 L5.7 6.4 Z" fill="#3b3b3b"/></svg>
<div class="b" style="left:352px;top:956px;width:1088px;height:1px;background:#e3e3e3;"></div>
<span class="t" style="left:376.50px;top:926.00px;height:21px;line-height:21px;font-size:14px;color:#3b3b3b;">1</span>
<span class="t" style="left:408.50px;top:926.00px;height:21px;line-height:21px;font-size:14px;color:#3b3b3b;letter-spacing:0.067px;">High</span>
<span class="t" style="left:924.40px;top:926.00px;height:21px;line-height:21px;font-size:14px;color:#3b3b3b;letter-spacing:-0.358px;">In Progress</span>
<div class="b" style="left:352px;top:998px;width:1088px;height:1px;background:#e3e3e3;"></div>
<span class="t" style="left:376.50px;top:968.00px;height:21px;line-height:21px;font-size:14px;color:#3b3b3b;">2</span>
<span class="t" style="left:408.50px;top:968.00px;height:21px;line-height:21px;font-size:14px;color:#3b3b3b;letter-spacing:-0.024px;">Normal</span>
<span class="t" style="left:924.40px;top:968.00px;height:21px;line-height:21px;font-size:14px;color:#3b3b3b;letter-spacing:-0.059px;">On Hold</span>
<div class="b" style="left:352px;top:1040px;width:1088px;height:1px;background:#e3e3e3;"></div>
<span class="t" style="left:376.50px;top:1010.00px;height:21px;line-height:21px;font-size:14px;color:#3b3b3b;">3</span>
<span class="t" style="left:408.50px;top:1010.00px;height:21px;line-height:21px;font-size:14px;color:#3b3b3b;letter-spacing:-0.859px;">Low</span>
<span class="t" style="left:924.40px;top:1010.00px;height:21px;line-height:21px;font-size:14px;color:#3b3b3b;letter-spacing:-0.081px;">Not Started</span>
<div class="b" style="left:592px;top:326px;width:100px;height:88px;background:#ffffff;border-radius:4px;box-shadow:0 6px 14px rgba(0,0,0,0.14),0 0 3px rgba(0,0,0,0.10);"></div>
<div class="b" style="left:592px;top:338px;width:100px;height:32px;background:#f0f0f0;"></div>
<svg class="i" style="left:608px;top:346px;" width="16" height="16" viewBox="0 0 16 16" preserveAspectRatio="none"><path d="M0.6 15.4 L1 12.2 L9.8 3.4 L12.6 6.2 L3.8 15 Z M10.8 2.4 L12.4 0.8 C12.8 0.4 13.4 0.4 13.8 0.8 L15.2 2.2 C15.6 2.6 15.6 3.2 15.2 3.6 L13.6 5.2 Z" fill="#333"/></svg>
<span class="t" style="left:636.70px;top:344.70px;height:21px;line-height:21px;font-size:14px;color:#3b3b3b;letter-spacing:-0.507px;">Edit</span>
<svg class="i" style="left:608px;top:378px;" width="16" height="16" viewBox="0 0 16 16" preserveAspectRatio="none"><path d="M0.4 2.4 H15.6" stroke="#333" stroke-width="1.1"/><path d="M5 0.3 H11 V2.4 H5 Z" fill="#333"/><path d="M2.4 2.6 V13.6 C2.4 14.8 3.2 15.5 4.4 15.5 H11.6 C12.8 15.5 13.6 14.8 13.6 13.6 V2.6" fill="none" stroke="#333" stroke-width="1.1"/><path d="M6.3 5.4 V12.8 M9.7 5.4 V12.8" stroke="#333" stroke-width="1.1"/></svg>
<span class="t" style="left:636.70px;top:376.70px;height:21px;line-height:21px;font-size:14px;color:#3b3b3b;letter-spacing:-0.375px;">Delete</span>
</div></body></html>
